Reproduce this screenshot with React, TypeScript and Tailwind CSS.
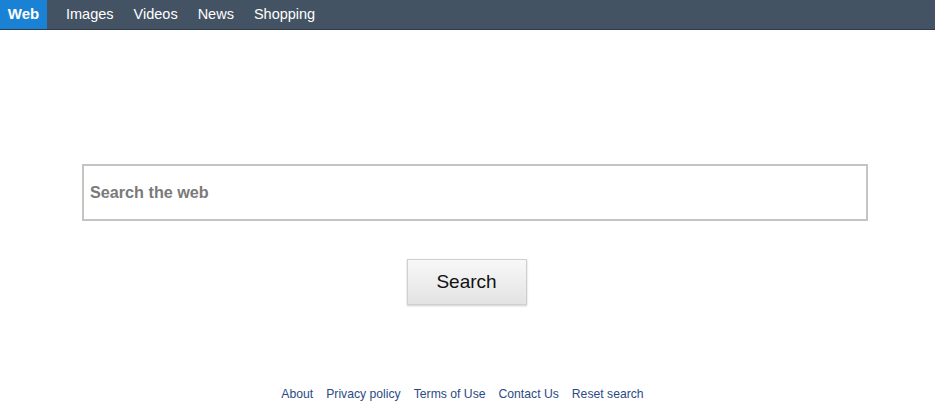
import React from 'react'

const tabs = ['Web', 'Images', 'Videos', 'News', 'Shopping']
const footerLinks = ['About', 'Privacy policy', 'Terms of Use', 'Contact Us', 'Reset search']

export default function App() {
  return (
    <div className="h-[401px] bg-white flex flex-col font-['Liberation_Sans',Arial,sans-serif]">
      {/* top nav */}
      <nav className="h-[30px] bg-[#435363] border-b border-[#2f3c48] flex items-stretch">
        {tabs.map((t, i) =>
          i === 0 ? (
            <a key={t} className="bg-[#1a82d4] text-white font-bold text-[15px] w-[47px] mr-[9px] flex items-center justify-center">
              {t}
            </a>
          ) : (
            <a key={t} className="text-white text-[14.5px] flex items-center px-[10px]">
              {t}
            </a>
          )
        )}
      </nav>

      {/* search */}
      <div className="flex-1 flex flex-col items-center">
        <div className="mt-[134px] w-[786px] ml-[15px] h-[57px] border-2 border-[#c4c4c4] flex items-center px-[6px]">
          <input
            placeholder="Search the web"
            className="w-full outline-none text-[16.2px] font-bold placeholder:text-[#7a7a7a] text-[#333]"
          />
        </div>
        <button className="mt-[38px] w-[120px] h-[46px] ml-[-2px] border border-[#cfcfcf] bg-gradient-to-b from-[#f8f8f8] to-[#e3e3e3] shadow-[0_1px_2px_rgba(0,0,0,0.2)] text-[19px] text-[#111]">
          Search
        </button>
      </div>

      {/* footer */}
      <footer className="flex justify-center gap-[13px] leading-[14px] pt-[1px] text-[12.2px] text-[#2c4a85] ml-[-10px]">
        {footerLinks.map((l) => (
          <a key={l}>{l}</a>
        ))}
      </footer>
    </div>
  )
}
